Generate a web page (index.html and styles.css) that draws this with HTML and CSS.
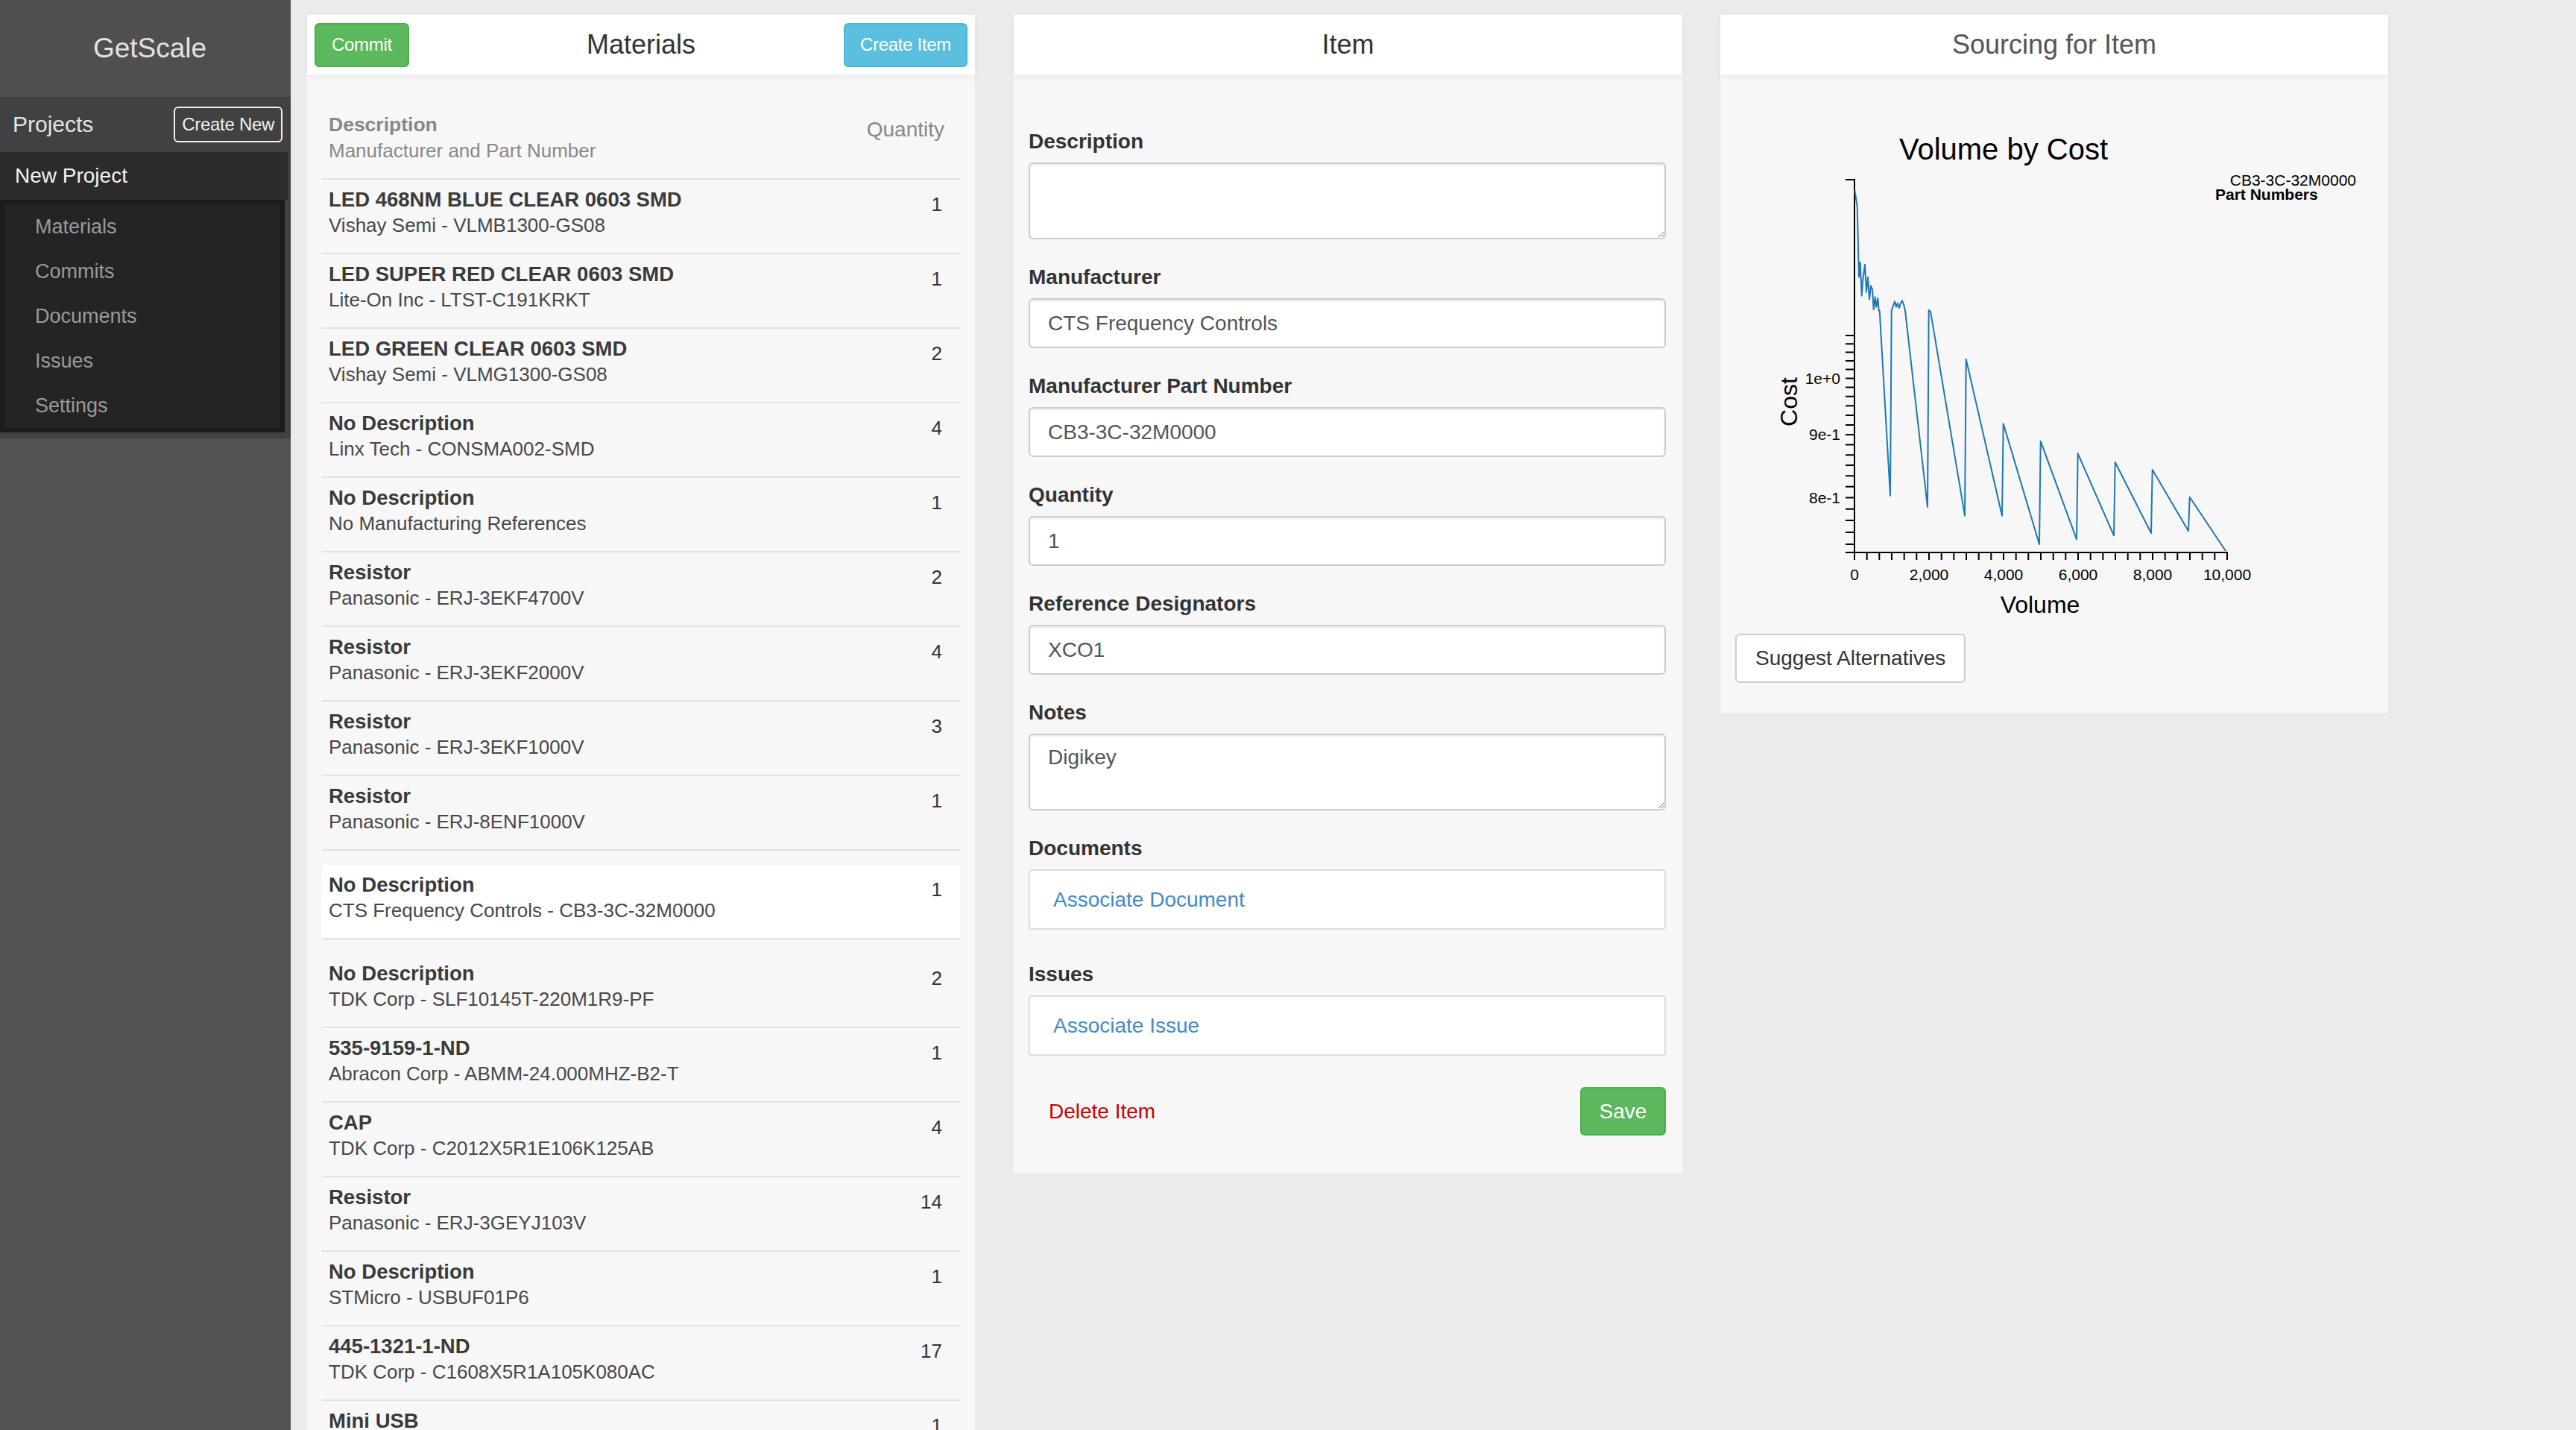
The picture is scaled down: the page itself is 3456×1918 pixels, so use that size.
FILE: index.html
```html
<!DOCTYPE html>
<html lang="en">
<head>
<meta charset="utf-8">
<title>GetScale</title>
<link rel="stylesheet" href="styles.css">
</head>
<body>
<div class="app">
  <aside class="sidebar">
    <div class="brand">GetScale</div>
    <div class="projects">
      <div class="projects-head">
        <span class="projects-title">Projects</span>
        <button class="btn-create">Create New</button>
      </div>
      <div class="project-active">New Project</div>
      <div class="submenu">
        <ul class="submenu-list">
          <li class="submenu-item">Materials</li>
          <li class="submenu-item">Commits</li>
          <li class="submenu-item">Documents</li>
          <li class="submenu-item">Issues</li>
          <li class="submenu-item">Settings</li>
        </ul>
      </div>
    </div>
  </aside>

  <main class="panels">
    <section class="panel panel-materials">
      <header class="panel-head mat-head">
        <button class="btn btn-commit">Commit</button>
        <span class="panel-title">Materials</span>
        <button class="btn btn-create-item">Create Item</button>
      </header>
      <div class="mat-body">
        <div class="col-head">
          <div>
            <div class="col-desc">Description</div>
            <div>Manufacturer and Part Number</div>
          </div>
          <div class="qty-h">Quantity</div>
        </div>
        <div class="row"><div><div class="row-title">LED 468NM BLUE CLEAR 0603 SMD</div><div class="row-sub">Vishay Semi - VLMB1300-GS08</div></div><div class="row-qty">1</div></div>
        <div class="row"><div><div class="row-title">LED SUPER RED CLEAR 0603 SMD</div><div class="row-sub">Lite-On Inc - LTST-C191KRKT</div></div><div class="row-qty">1</div></div>
        <div class="row"><div><div class="row-title">LED GREEN CLEAR 0603 SMD</div><div class="row-sub">Vishay Semi - VLMG1300-GS08</div></div><div class="row-qty">2</div></div>
        <div class="row"><div><div class="row-title">No Description</div><div class="row-sub">Linx Tech - CONSMA002-SMD</div></div><div class="row-qty">4</div></div>
        <div class="row"><div><div class="row-title">No Description</div><div class="row-sub">No Manufacturing References</div></div><div class="row-qty">1</div></div>
        <div class="row"><div><div class="row-title">Resistor</div><div class="row-sub">Panasonic - ERJ-3EKF4700V</div></div><div class="row-qty">2</div></div>
        <div class="row"><div><div class="row-title">Resistor</div><div class="row-sub">Panasonic - ERJ-3EKF2000V</div></div><div class="row-qty">4</div></div>
        <div class="row"><div><div class="row-title">Resistor</div><div class="row-sub">Panasonic - ERJ-3EKF1000V</div></div><div class="row-qty">3</div></div>
        <div class="row"><div><div class="row-title">Resistor</div><div class="row-sub">Panasonic - ERJ-8ENF1000V</div></div><div class="row-qty">1</div></div>
        <div class="row row-selected"><div><div class="row-title">No Description</div><div class="row-sub">CTS Frequency Controls - CB3-3C-32M0000</div></div><div class="row-qty">1</div></div>
        <div class="row"><div><div class="row-title">No Description</div><div class="row-sub">TDK Corp - SLF10145T-220M1R9-PF</div></div><div class="row-qty">2</div></div>
        <div class="row"><div><div class="row-title">535-9159-1-ND</div><div class="row-sub">Abracon Corp - ABMM-24.000MHZ-B2-T</div></div><div class="row-qty">1</div></div>
        <div class="row"><div><div class="row-title">CAP</div><div class="row-sub">TDK Corp - C2012X5R1E106K125AB</div></div><div class="row-qty">4</div></div>
        <div class="row"><div><div class="row-title">Resistor</div><div class="row-sub">Panasonic - ERJ-3GEYJ103V</div></div><div class="row-qty">14</div></div>
        <div class="row"><div><div class="row-title">No Description</div><div class="row-sub">STMicro - USBUF01P6</div></div><div class="row-qty">1</div></div>
        <div class="row"><div><div class="row-title">445-1321-1-ND</div><div class="row-sub">TDK Corp - C1608X5R1A105K080AC</div></div><div class="row-qty">17</div></div>
        <div class="row"><div><div class="row-title">Mini USB</div></div><div class="row-qty">1</div></div>
      </div>
    </section>

    <section class="panel panel-item">
      <header class="panel-head"><span class="panel-title">Item</span></header>
      <div class="item-body">
        <div class="field">
          <label class="field-label">Description</label>
          <textarea class="field-input field-textarea"></textarea>
        </div>
        <div class="field">
          <label class="field-label">Manufacturer</label>
          <input class="field-input" type="text" value="CTS Frequency Controls">
        </div>
        <div class="field">
          <label class="field-label">Manufacturer Part Number</label>
          <input class="field-input" type="text" value="CB3-3C-32M0000">
        </div>
        <div class="field">
          <label class="field-label">Quantity</label>
          <input class="field-input" type="text" value="1">
        </div>
        <div class="field">
          <label class="field-label">Reference Designators</label>
          <input class="field-input" type="text" value="XCO1">
        </div>
        <div class="field">
          <label class="field-label">Notes</label>
          <textarea class="field-input field-textarea">Digikey</textarea>
        </div>
        <div class="field field-docs">
          <label class="field-label">Documents</label>
          <div class="assoc-box"><a class="assoc-link" href="#">Associate Document</a></div>
        </div>
        <div class="field field-issues">
          <label class="field-label">Issues</label>
          <div class="assoc-box"><a class="assoc-link" href="#">Associate Issue</a></div>
        </div>
        <div class="item-actions">
          <a class="delete-link" href="#">Delete Item</a>
          <button class="btn-save">Save</button>
        </div>
      </div>
    </section>

    <section class="panel panel-sourcing">
      <header class="panel-head"><span class="sourcing-title">Sourcing for Item</span></header>
      <div class="sourcing-body">
        <svg class="chart" viewBox="0 0 896 710" xmlns="http://www.w3.org/2000/svg">
          <g transform="translate(-2308 -130)" font-family="Liberation Sans, Arial, sans-serif" fill="#000">
            <text x="2688" y="214" font-size="40" text-anchor="middle">Volume by Cost</text>
            <text x="3161" y="249" font-size="21" text-anchor="end">CB3-3C-32M0000</text>
            <text x="2972" y="268" font-size="21" font-weight="bold">Part Numbers</text>

            <path d="M2476 241H2488V741H2476" fill="none" stroke="#000" stroke-width="2"/>
            <path fill="none" stroke="#000" stroke-width="2" d="M2476 450.1H2488M2476 461.2H2488M2476 472.5H2488M2476 484H2488M2476 495.6H2488M2476 507.5H2488M2476 519.6H2488M2476 531.8H2488M2476 544.3H2488M2476 557H2488M2476 569.9H2488M2476 583.1H2488M2476 596.5H2488M2476 610.2H2488M2476 624.1H2488M2476 638.3H2488M2476 652.8H2488M2476 667.6H2488M2476 682.7H2488M2476 698.1H2488M2476 713.9H2488M2476 730H2488"/>
            <text x="2469" y="507.5" dy="0.35em" font-size="21" text-anchor="end">1e+0</text>
            <text x="2469" y="583.1" dy="0.35em" font-size="21" text-anchor="end">9e-1</text>
            <text x="2469" y="667.6" dy="0.35em" font-size="21" text-anchor="end">8e-1</text>

            <path d="M2488 751V741H2988V751" fill="none" stroke="#000" stroke-width="2"/>
            <path fill="none" stroke="#000" stroke-width="2" d="M2504.7 741V751M2521.3 741V751M2538 741V751M2554.7 741V751M2571.3 741V751M2588 741V751M2604.7 741V751M2621.3 741V751M2638 741V751M2654.7 741V751M2671.3 741V751M2688 741V751M2704.7 741V751M2721.3 741V751M2738 741V751M2754.7 741V751M2771.3 741V751M2788 741V751M2804.7 741V751M2821.3 741V751M2838 741V751M2854.7 741V751M2871.3 741V751M2888 741V751M2904.7 741V751M2921.3 741V751M2938 741V751M2954.7 741V751M2971.3 741V751"/>
            <text x="2488" y="778" font-size="21" text-anchor="middle">0</text>
            <text x="2588" y="778" font-size="21" text-anchor="middle">2,000</text>
            <text x="2688" y="778" font-size="21" text-anchor="middle">4,000</text>
            <text x="2788" y="778" font-size="21" text-anchor="middle">6,000</text>
            <text x="2888" y="778" font-size="21" text-anchor="middle">8,000</text>
            <text x="2988" y="778" font-size="21" text-anchor="middle">10,000</text>

            <text x="2737" y="822" font-size="32" text-anchor="middle">Volume</text>
            <text transform="translate(2411 539) rotate(-90)" font-size="32" text-anchor="middle">Cost</text>

            <polyline fill="none" stroke="#1f77b4" stroke-width="2" stroke-linejoin="round" points="2488.3,255 2491.7,276.7 2494,371.7 2495.7,351.7 2497.7,396.7 2499.3,375 2502,355 2504,391.7 2506,371.7 2508,401.7 2510,383.3 2512,388.3 2513.7,415 2515.7,398.3 2517.3,411.7 2519.3,400 2520.7,416.7 2521.7,416.7 2536,665 2537.7,416.7 2542,404.3 2544,411.7 2546,406.7 2548,413.3 2550,406.7 2552,403.3 2554,408.3 2556,416.7 2586,680 2587.7,416 2590,417.7 2636,691.7 2637.7,481.7 2686,691.7 2687.7,568.3 2736,730 2737.7,591.7 2786,723.3 2787.7,608.3 2836,718.3 2837.7,620 2886,715 2887.7,630 2936,712.3 2937.7,666.7 2986,739"/>
          </g>
        </svg>
        <button class="btn-suggest">Suggest Alternatives</button>
      </div>
    </section>
  </main>
</div>
</body>
</html>
```

FILE: styles.css
```css
* {
  box-sizing: border-box;
}

html,
body {
  margin: 0;
  height: 100%;
}

body {
  font-family: "Liberation Sans", Arial, sans-serif;
  background: #ebebeb;
  color: #333;
  overflow: hidden;
}

.app {
  display: flex;
  height: 1918px;
}

/* Sidebar */
.sidebar {
  width: 390px;
  flex: none;
  background: #525252;
}

.brand {
  height: 130px;
  display: flex;
  align-items: center;
  justify-content: center;
  padding-left: 12px;
  font-size: 37px;
  color: #e2e2e2;
  background: #4f4f4f;
}

.projects {
  background: #414141;
  padding: 0 4px 8px 0;
}

.projects-head {
  height: 74px;
  display: flex;
  align-items: center;
  justify-content: space-between;
  padding: 0 7px 0 17px;
}

.projects-title {
  font-size: 30px;
  color: #e4e4e4;
}

.btn-create {
  height: 48px;
  padding: 0 9px;
  border: 2px solid #f0f0f0;
  border-radius: 6px;
  background: transparent;
  color: #f0f0f0;
  font: 24px "Liberation Sans", Arial, sans-serif;
  letter-spacing: -0.3px;
}

.project-active {
  height: 64px;
  background: #2b2b2b;
  display: flex;
  align-items: center;
  padding-left: 20px;
  font-size: 28px;
  color: #f4f4f4;
}

.submenu {
  background: #1c1c1c;
  padding: 6px;
  margin-right: 4px;
}

.submenu-list {
  list-style: none;
  margin: 0;
  padding: 0;
  background: #242424;
}

.submenu-item {
  height: 60px;
  display: flex;
  align-items: center;
  padding-left: 41px;
  font-size: 27px;
  color: #9a9a9a;
}

/* Panels */
.panels {
  display: flex;
  align-items: flex-start;
  padding: 20px 0 0 22px;
}

.panel {
  width: 896px;
  flex: none;
  background: #f7f7f7;
}

.panel-item {
  width: 897px;
  margin-left: 52px;
}

.panel-sourcing {
  margin-left: 51px;
}

.panel-head {
  height: 80px;
  background: #fff;
  display: flex;
  align-items: center;
  justify-content: center;
  position: relative;
  box-shadow: 0 4px 8px rgba(0, 0, 0, 0.045);
}

.panel-title {
  font-size: 36px;
  color: #333;
}

.mat-head {
  display: grid;
  grid-template-columns: 1fr auto 1fr;
  padding: 0 10px;
}

.btn {
  height: 59px;
  padding: 0 20px;
  border-radius: 6px;
  color: #fff;
  font: 24px "Liberation Sans", Arial, sans-serif;
  letter-spacing: -0.3px;
}

.btn-commit {
  justify-self: start;
  padding: 0 21px;
  background: #5cb85c;
  border: 2px solid #4cae4c;
}

.btn-create-item {
  justify-self: end;
  background: #5bc0de;
  border: 2px solid #46b8da;
}

/* Materials list */
.mat-body {
  padding: 0 20px;
}

.col-head {
  display: flex;
  justify-content: space-between;
  padding: 50px 21px 19px 9px;
  border-bottom: 2px solid #e2e2e2;
  font-size: 26px;
  line-height: 35px;
  color: #888;
}

.col-desc {
  font-size: 26.5px;
  font-weight: bold;
}

.qty-h {
  margin-top: 6px;
  font-size: 28px;
}

.row {
  display: flex;
  justify-content: space-between;
  padding: 10px 24px 20px 9px;
  border-bottom: 2px solid #e2e2e2;
}

.row-selected {
  background: #fff;
  margin: 19px 0;
}

.row-title {
  font-size: 27.5px;
  font-weight: bold;
  line-height: 34px;
  color: #3a3a3a;
}

.row-sub {
  font-size: 26px;
  line-height: 34px;
  color: #484848;
}

.row-qty {
  font-size: 26px;
  line-height: 34px;
  margin-top: 6px;
  color: #333;
}

/* Item form */
.item-body {
  padding: 71px 22px 51px 20px;
}

.field {
  margin-bottom: 32px;
}

.field-label {
  display: block;
  font-size: 28px;
  font-weight: bold;
  line-height: 38px;
  margin-bottom: 9px;
  color: #333;
}

.field-input {
  display: block;
  width: 100%;
  height: 67px;
  padding: 0 24px;
  border: 2px solid #ccc;
  border-radius: 6px;
  background: #fff;
  font: 28px "Liberation Sans", Arial, sans-serif;
  color: #555;
  box-shadow: inset 0 2px 2px rgba(0, 0, 0, 0.075);
}

.field-textarea {
  height: 103px;
  padding: 10px 24px;
  line-height: 40px;
  resize: vertical;
}

.assoc-box {
  height: 81px;
  border: 2px solid #ddd;
  border-radius: 4px;
  background: #fff;
  display: flex;
  align-items: center;
  padding-left: 31px;
}

.assoc-link {
  color: #428bca;
  font-size: 28px;
  text-decoration: none;
}

.field-docs {
  margin-bottom: 41px;
}

.field-issues {
  margin-bottom: 42px;
}

.item-actions {
  display: flex;
  justify-content: space-between;
  align-items: center;
}

.delete-link {
  color: #cc0000;
  font-size: 28px;
  padding-left: 27px;
  text-decoration: none;
}

.btn-save {
  width: 115px;
  height: 65px;
  background: #5cb85c;
  border: 2px solid #4cae4c;
  border-radius: 6px;
  color: #fff;
  font: 28px "Liberation Sans", Arial, sans-serif;
}

/* Sourcing */
.sourcing-title {
  font-size: 36px;
  color: #555;
}

.sourcing-body {
  padding: 30px 0 40px;
}

.chart {
  display: block;
  width: 896px;
  height: 710px;
}

.btn-suggest {
  display: block;
  margin: 10px 0 0 20px;
  height: 66px;
  padding: 0 25px;
  border: 2px solid #ccc;
  border-radius: 6px;
  background: #fff;
  color: #333;
  font: 28px "Liberation Sans", Arial, sans-serif;
}
```
